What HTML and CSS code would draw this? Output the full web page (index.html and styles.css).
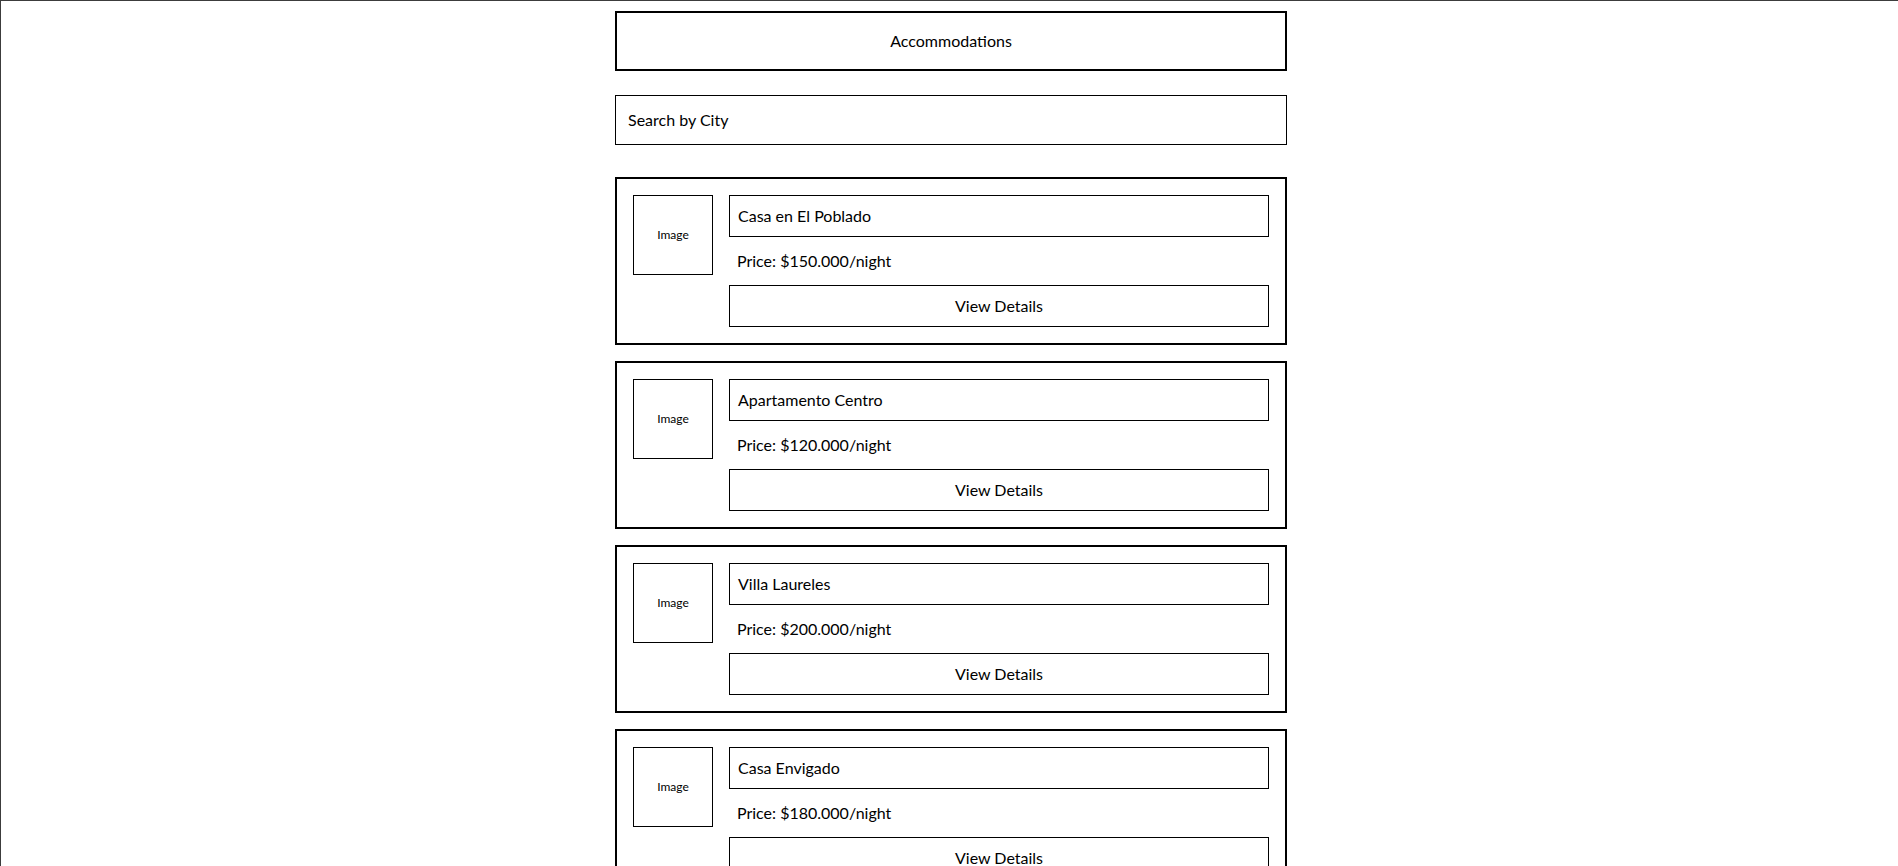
FILE: index.html
```html
<!DOCTYPE html>
<html lang="en">
<head>
  <meta charset="UTF-8">
  <meta name="viewport" content="width=device-width, initial-scale=1.0">
  <title>Accommodations</title>
  <link rel="stylesheet" href="styles.css">
</head>
<body>
  <div class="container">
    <header class="title-bar">Accommodations</header>
    <input class="search" type="text" placeholder="Search by City">
    <div class="list">
      <div class="card">
        <div class="thumb">Image</div>
        <div class="details">
          <div class="name">Casa en El Poblado</div>
          <p class="price">Price: $150.000/night</p>
          <button class="details-button">View Details</button>
        </div>
      </div>
      <div class="card">
        <div class="thumb">Image</div>
        <div class="details">
          <div class="name">Apartamento Centro</div>
          <p class="price">Price: $120.000/night</p>
          <button class="details-button">View Details</button>
        </div>
      </div>
      <div class="card">
        <div class="thumb">Image</div>
        <div class="details">
          <div class="name">Villa Laureles</div>
          <p class="price">Price: $200.000/night</p>
          <button class="details-button">View Details</button>
        </div>
      </div>
      <div class="card">
        <div class="thumb">Image</div>
        <div class="details">
          <div class="name">Casa Envigado</div>
          <p class="price">Price: $180.000/night</p>
          <button class="details-button">View Details</button>
        </div>
      </div>
    </div>
  </div>
</body>
</html>
```

FILE: styles.css
```css
html {
  border-top: 1px solid #3c3c3c;
  border-left: 1px solid #3c3c3c;
}
body {
  font-family: 'Segoe UI', Lato, sans-serif;
  font-size: 16px;
  line-height: 24px;
  background-color: #fff;
  color: #000;
  margin: 0;
  padding: 10px 0 0 3px;
}
.container {
  width: 672px;
  margin: 0 auto;
  display: flex;
  flex-direction: column;
}
.title-bar {
  border: 2px solid #000;
  padding: 16px;
  text-align: center;
}
.search {
  margin-top: 24px;
  border: 1px solid #000;
  padding: 12px;
  font: inherit;
  color: #000;
  outline: none;
}
.search::placeholder {
  color: #000;
  opacity: 1;
}
.list {
  margin-top: 32px;
  display: flex;
  flex-direction: column;
  gap: 16px;
}
.card {
  border: 2px solid #000;
  padding: 16px;
  display: flex;
  align-items: flex-start;
  gap: 16px;
}
.thumb {
  width: 80px;
  height: 80px;
  box-sizing: border-box;
  border: 1px solid #000;
  flex-shrink: 0;
  display: flex;
  align-items: center;
  justify-content: center;
  font-size: 12px;
}
.details {
  flex: 1;
  display: flex;
  flex-direction: column;
  gap: 8px;
}
.name {
  border: 1px solid #000;
  padding: 8px;
}
.price {
  margin: 0;
  padding: 4px 8px;
}
.details-button {
  background-color: #fff;
  border: 1px solid #000;
  padding: 8px;
  font: inherit;
  color: #000;
  cursor: pointer;
}
```
